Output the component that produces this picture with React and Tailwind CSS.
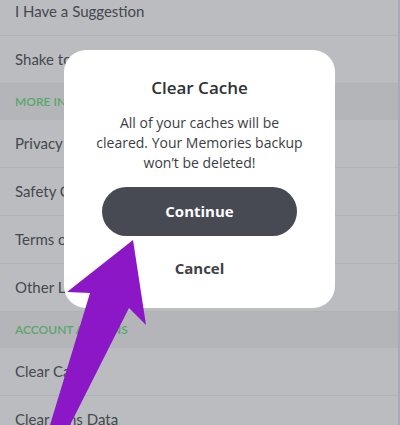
import React from 'react';

const Row = ({ label }) => (
  <div className="h-12 flex items-center px-[15px] bg-[#babcc0] border-b border-[#b0b2b6]">
    <span className="text-[15px] text-[#45484d]">{label}</span>
  </div>
);

const Header = ({ label }) => (
  <div className="h-9 flex items-center px-[15px] bg-[#b3b5b9]">
    <span className="text-[12px] font-semibold text-[#5aa66b]">{label}</span>
  </div>
);

export default function App() {
  return (
    <div className="relative w-[400px] h-[425px] overflow-hidden bg-[#babcc0] font-['Lato','Noto_Sans',sans-serif]">
      {/* Settings list (dimmed) */}
      <div className="-mt-3 flex flex-col">
        <Row label="I Have a Suggestion" />
        <Row label="Shake to Report" />
        <Header label="MORE INFORMATION" />
        <Row label="Privacy Policy" />
        <Row label="Safety Center" />
        <Row label="Terms of Service" />
        <Row label="Other Legal" />
        <Header label="ACCOUNT ACTIONS" />
        <Row label="Clear Cache" />
        <Row label="Clear Lens Data" />
      </div>

      {/* Right edge strip */}
      <div className="absolute top-0 right-0 w-[2px] h-full bg-[#ada8b8]" />

      {/* Dialog */}
      <div className="absolute left-[64px] top-[50px] w-[271px] h-[258px] bg-white rounded-[22px] flex flex-col items-center pt-[26px] font-['Open_Sans','Noto_Sans',sans-serif]">
        <h2 className="text-[17px] leading-6 font-semibold text-[#2f3236]">Clear Cache</h2>
        <p className="mt-[13px] text-[14px] leading-[20px] text-center text-[#3b3e43] px-3">
          All of your caches will be
          <br />
          cleared. Your Memories backup
          <br />
          won’t be deleted!
        </p>
        <button className="mt-[14px] w-[195px] h-[49px] rounded-full bg-[#474a52] text-white text-[15px] font-bold">
          Continue
        </button>
        <button className="mt-[22px] text-[15px] leading-5 font-bold text-[#3e4148]">Cancel</button>
      </div>

      {/* Purple arrow annotation */}
      <svg className="absolute inset-0" width="400" height="425" viewBox="0 0 400 425">
        <polygon
          points="133,240 146,325 129,308 70,425 50,425 90,293 67,292"
          fill="#8b17c6"
        />
      </svg>
    </div>
  );
}
